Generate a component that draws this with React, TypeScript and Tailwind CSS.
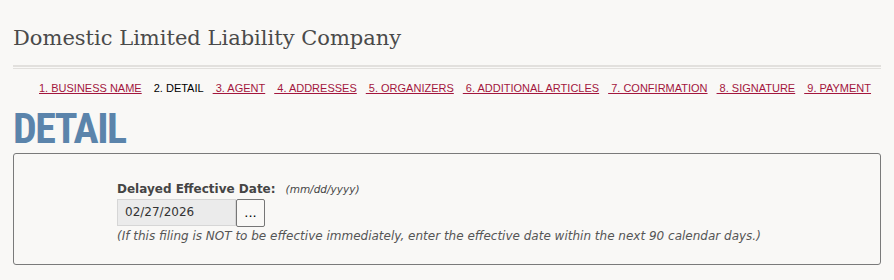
import React from "react";

const steps = [
  { label: "1. BUSINESS NAME", active: false },
  { label: "2. DETAIL", active: true },
  { label: "3. AGENT", active: false },
  { label: "4. ADDRESSES", active: false },
  { label: "5. ORGANIZERS", active: false },
  { label: "6. ADDITIONAL ARTICLES", active: false },
  { label: "7. CONFIRMATION", active: false },
  { label: "8. SIGNATURE", active: false },
  { label: "9. PAYMENT", active: false },
];

const App: React.FC = () => {
  return (
    <div className="min-h-[280px] w-[894px] bg-[#f9f8f6] px-[13px] pt-[23px]">
      <h1 className="font-['DejaVu_Serif',serif] text-[21px] leading-[30px] text-[#4a4a4a]">
        Domestic Limited Liability Company
      </h1>

      <div className="mt-[12px] h-[4px] border-t-2 border-b border-[#e2e0dd]" />

      <div className="mt-[12px] flex pl-[26px] font-['Liberation_Sans',Arial,sans-serif] text-[11px] leading-[14px] whitespace-nowrap">
        {steps.map((s) =>
          s.active ? (
            <span key={s.label} className="ml-[3px] mr-[9px] text-black">
              {s.label}
            </span>
          ) : (
            <a
              key={s.label}
              href="#"
              className="mr-[9px] whitespace-pre text-[#a3163d] underline"
            >
              {(s.label.startsWith("1.") ? "" : " ") + s.label}
            </a>
          )
        )}
      </div>

      <h2 className="mt-[14px] font-['Roboto',sans-serif] text-[42px] leading-[40px] font-bold tracking-[-1.5px] text-[#5b84ab] [font-stretch:condensed]">
        DETAIL
      </h2>

      <div className="mt-[4px] rounded-[3px] border border-[#7a7a7a] pt-[27px] pb-[20px] pl-[103px] font-['DejaVu_Sans',Verdana,sans-serif] text-[#454545]">
        <div className="flex items-baseline gap-[10px]">
          <span className="text-[12px] leading-[16px] font-bold">
            Delayed Effective Date:
          </span>
          <span className="text-[10.5px] italic">(mm/dd/yyyy)</span>
        </div>
        <div className="mt-[1px] flex">
          <input
            readOnly
            value="02/27/2026"
            className="h-[27px] w-[119px] border border-[#d6d6d6] bg-[#ebebeb] px-[7px] text-[12px] text-[#333] outline-none"
          />
          <button
            type="button"
            className="h-[28px] w-[29px] rounded-[2px] border border-[#767676] bg-[#f9f8f6] text-[13px] leading-[20px] text-black"
          >
            ...
          </button>
        </div>
        <p className="mt-[1px] text-[12px] leading-[16px] italic text-[#555]">
          (If this filing is NOT to be effective immediately, enter the effective date within the next 90 calendar days.)
        </p>
      </div>
    </div>
  );
};

export default App;
